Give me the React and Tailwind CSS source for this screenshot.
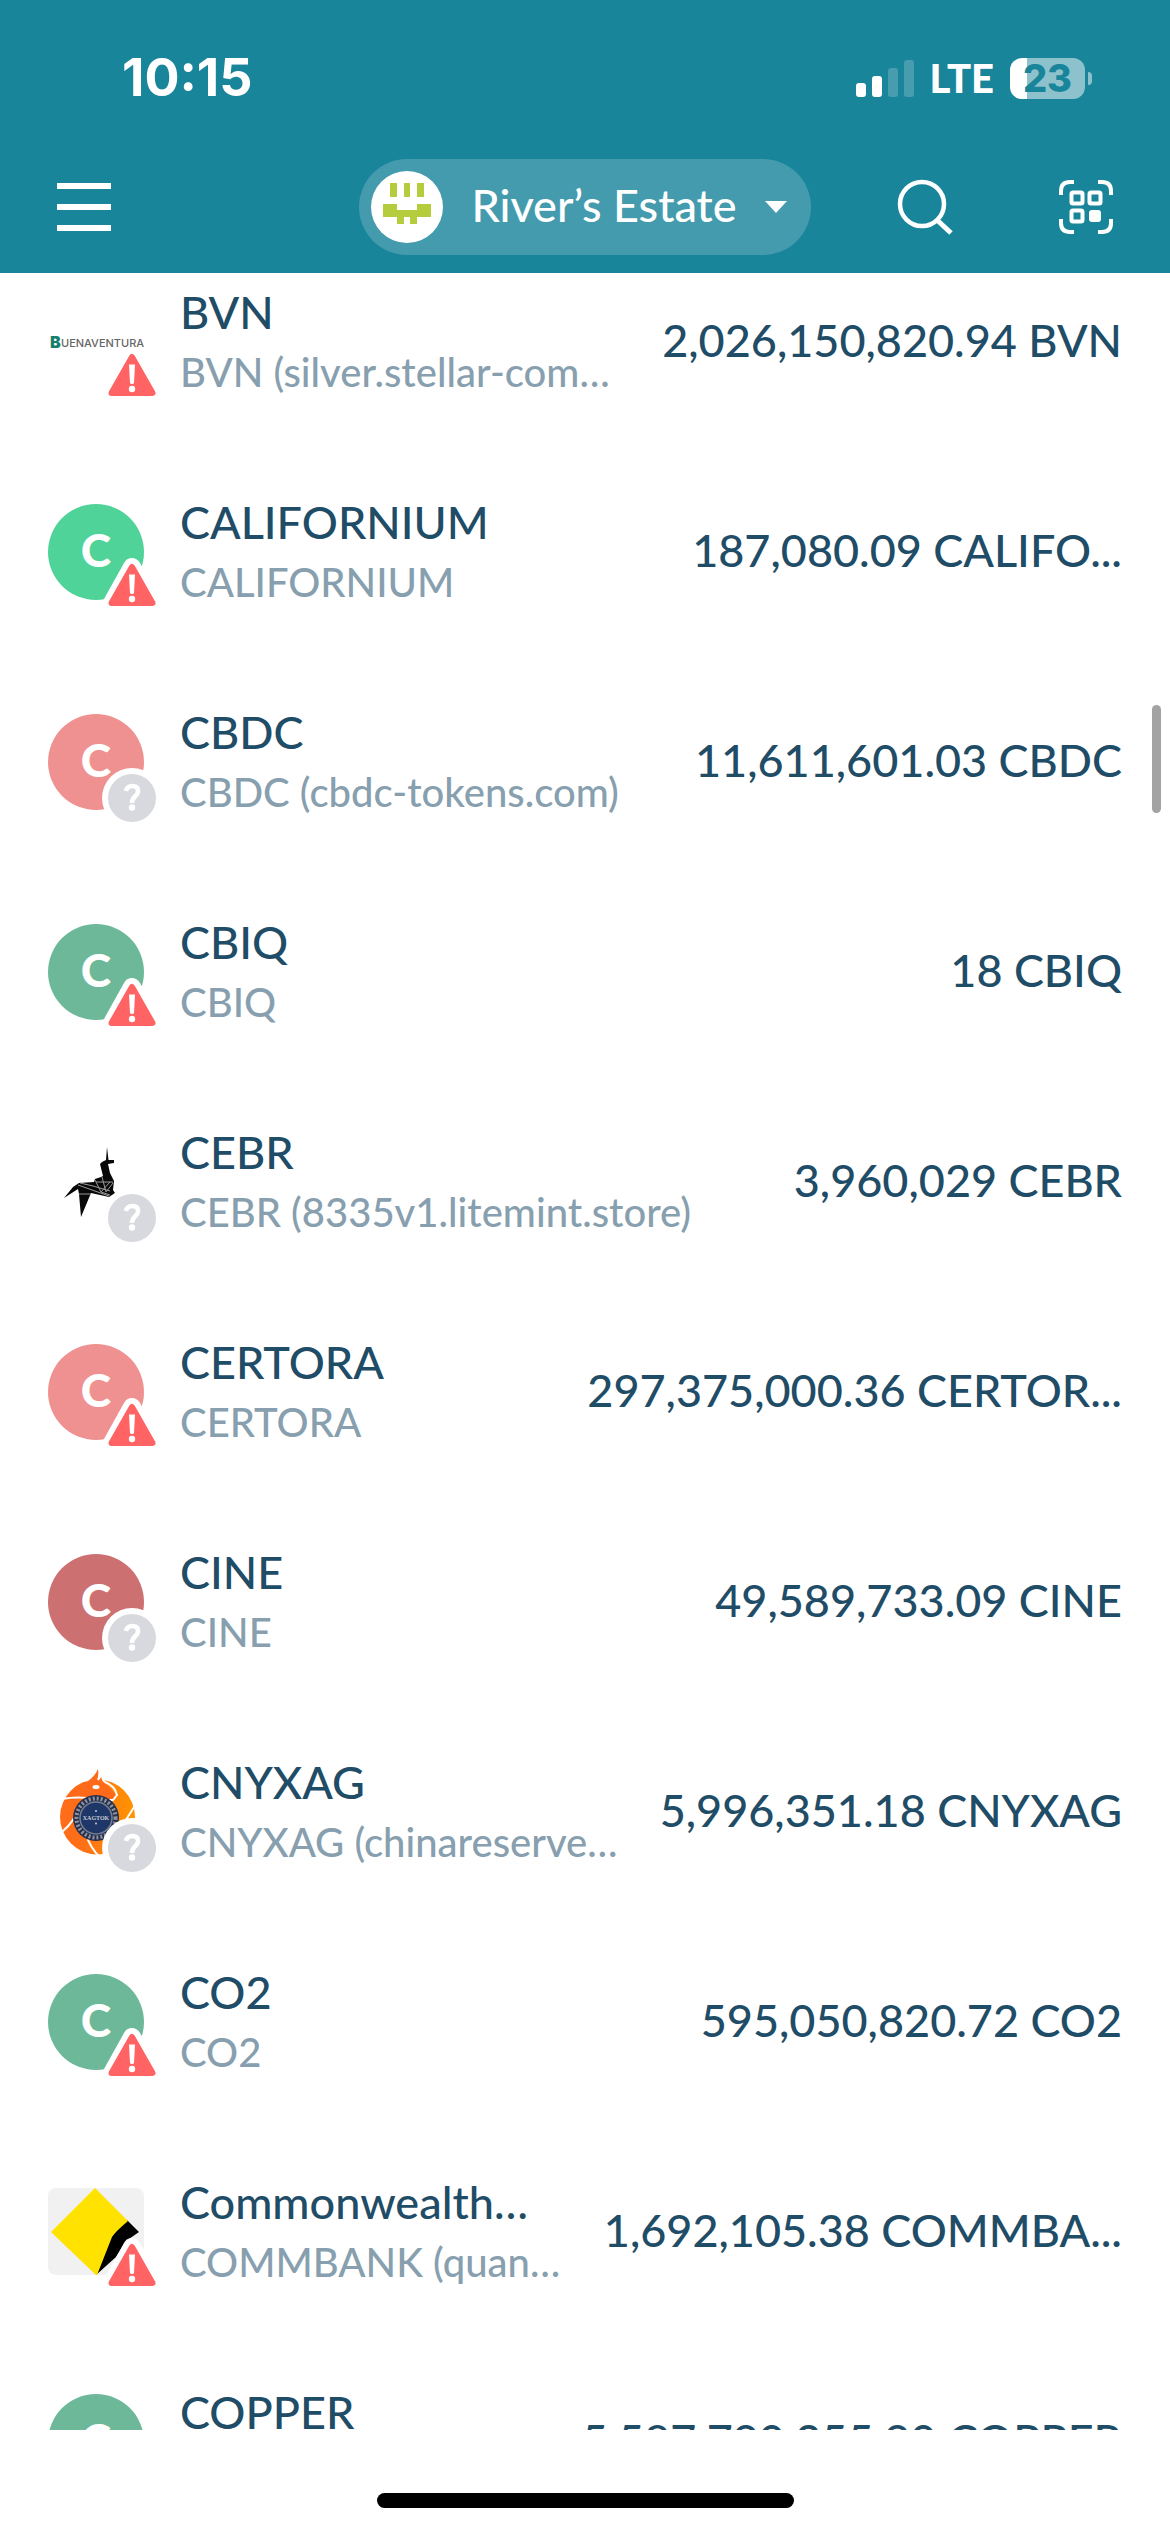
import React from "react";

function WarningBadge() {
  return (
    <svg viewBox="0 0 60 60" className="absolute -right-[18px] -bottom-3 h-[60px] w-[60px]" aria-label="Warning">
      <path d="M30 15 L50 51 L10 51 Z" fill="#fff" stroke="#fff" strokeWidth="18" strokeLinejoin="round" />
      <path d="M30 15 L50.500 51 L9.500 51 Z" fill="#ff6363" stroke="#ff6363" strokeWidth="6" strokeLinejoin="round" />
      <path d="M27 22.500 H33 L32 41 Q32 42 30 42 Q28 42 28 41 Z" fill="#fff" />
      <circle cx="30" cy="47" r="3.200" fill="#fff" />
    </svg>
  );
}

function UnknownBadge() {
  return (
    <svg viewBox="0 0 60 60" className="absolute -right-[18px] -bottom-[18px] h-[60px] w-[60px]" aria-label="Unknown">
      <circle cx="30" cy="30" r="30" fill="#fff" />
      <circle cx="30" cy="30" r="24" fill="#d8d9df" />
      <path d="M24 23 Q25 18 30.500 18 Q36 18 36 23 Q36 26 33 28.500 Q30 31 30 35" fill="none" stroke="#fff" strokeWidth="4.500" />
      <circle cx="30" cy="39.500" r="3.200" fill="#fff" />
    </svg>
  );
}

function LetterIcon({ color }) {
  return (
    <div className={`flex h-24 w-24 items-center justify-center rounded-full pb-1 text-[46px] leading-none font-black text-white ${color}`}>
      C
    </div>
  );
}

function BuenaventuraLogo() {
  return (
    <svg viewBox="0 0 96 96" className="h-24 w-24" aria-label="Buenaventura">
      <text x="2" y="54" fontFamily="Inter, sans-serif" fontWeight="900" fontSize="16" fill="#14806c">B</text>
      <text x="13" y="53" fontFamily="Inter, sans-serif" fontSize="11" fontWeight="500" fill="#666">UENAVENTURA</text>
    </svg>
  );
}

function UnicornLogo() {
  return (
    <svg viewBox="0 0 96 96" className="h-24 w-24" aria-label="Unicorn">
      <path d="M59 13 L60.500 26 L66 26 L66 29 L60 30 L62 39 L66 47 L65 56 L67 59 L61 63 L43 59 L33 83 L31 60 L30 55 L16 64 L25 53 L31 49 L46 48 L47 45 L53 43 L55 42 L52 30 L54 28 L58 26 Z" fill="#080808" />
      <path d="M30 51 L61 62 M32 49 L45 52 L62 57 M47 46 L53 58 L62 48 M54 43 L58 58 L65 49 M31 60 L43 60 M48 48 L65 48 M53 58 L62 61" fill="none" stroke="#999" strokeWidth="1" />
    </svg>
  );
}

function WolfLogo() {
  return (
    <svg viewBox="0 0 96 96" className="h-24 w-24" aria-label="CNYXAG">
      <defs>
        <linearGradient id="wolf" x1="0" y1="0" x2="1" y2="0">
          <stop offset="0.2" stopColor="#ff6c1a" />
          <stop offset="1" stopColor="#ff9400" />
        </linearGradient>
      </defs>
      <circle cx="49.500" cy="53" r="37.500" fill="url(#wolf)" />
      <path d="M38 0 H57 V17 L54 22 L38 18 Z" fill="#fff" />
      <path d="M19 34 Q26 20 40 17 Q47 12 50 5 Q51 11 49 16 L55 10 L55 17 L68 31 L66 35 L52 37 Z" fill="#ff6a1a" />
      <path d="M55 10 Q53 15 57 18 Q67 22 69 31 L65 36 L58 36 M50 16 L54 10" fill="none" stroke="#fff" strokeWidth="2" />
      <path d="M14 35 Q30 32 46 35 M31 42 Q28 56 14 68 M38 70 Q42 84 52 93 M88 40 L76 59" fill="none" stroke="#fff" strokeWidth="2" />
      <ellipse cx="48" cy="23" rx="3.500" ry="2" fill="#fff" />
      <circle cx="48" cy="54" r="23" fill="#25304c" />
      <circle cx="48" cy="54" r="19.500" fill="none" stroke="#8d93a3" strokeWidth="4" strokeDasharray="2 2" />
      <circle cx="48" cy="54" r="16" fill="#1f3768" stroke="#777f90" strokeWidth="1.500" />
      <circle cx="48" cy="47" r="1" fill="#c5cad6" />
      <circle cx="48" cy="59.500" r="1" fill="#c5cad6" />
      <text x="48" y="56" textAnchor="middle" fontFamily="Liberation Serif, serif" fontWeight="700" fontSize="6" fill="#c5cad6">XAGTOK</text>
    </svg>
  );
}

function BankLogo() {
  return (
    <svg viewBox="0 0 96 96" className="h-24 w-24" aria-label="Commonwealth Bank">
      <rect y="4" width="96" height="87" rx="8" fill="#f1f1f1" />
      <path d="M79 36 L91 48 L78 57 L68 73 L48 91 L60 50 Z" fill="#000" />
      <path d="M47 4 L80 37 Q67 48 64 53 L49 91 H48 L3 48 Z" fill="#ffe200" />
    </svg>
  );
}

const assets = [
  { name: "BVN", sub: "BVN (silver.stellar-com…", amount: "2,026,150,820.94 BVN", icon: <BuenaventuraLogo />, warn: true },
  { name: "CALIFORNIUM", sub: "CALIFORNIUM", amount: "187,080.09 CALIFO...", icon: <LetterIcon color="bg-[#50d399]" />, warn: true },
  { name: "CBDC", sub: "CBDC (cbdc-tokens.com)", amount: "11,611,601.03 CBDC", icon: <LetterIcon color="bg-[#f09191]" /> },
  { name: "CBIQ", sub: "CBIQ", amount: "18 CBIQ", icon: <LetterIcon color="bg-[#6cb898]" />, warn: true },
  { name: "CEBR", sub: "CEBR (8335v1.litemint.store)", amount: "3,960,029 CEBR", icon: <UnicornLogo /> },
  { name: "CERTORA", sub: "CERTORA", amount: "297,375,000.36 CERTOR...", icon: <LetterIcon color="bg-[#f09191]" />, warn: true },
  { name: "CINE", sub: "CINE", amount: "49,589,733.09 CINE", icon: <LetterIcon color="bg-[#cd7072]" /> },
  { name: "CNYXAG", sub: "CNYXAG (chinareserve…", amount: "5,996,351.18 CNYXAG", icon: <WolfLogo /> },
  { name: "CO2", sub: "CO2", amount: "595,050,820.72 CO2", icon: <LetterIcon color="bg-[#6cb898]" />, warn: true },
  { name: "Commonwealth…", sub: "COMMBANK (quan…", amount: "1,692,105.38 COMMBA...", icon: <BankLogo />, warn: true },
  { name: "COPPER", sub: "COPPER", amount: "5,587,790,255.90 COPPER", icon: <LetterIcon color="bg-[#6cb898]" />, warn: true },
];

function AssetRow({ asset }) {
  return (
    <li className="flex h-[210px] items-center gap-9 px-12 whitespace-nowrap">
      <div className="relative shrink-0">
        {asset.icon}
        {asset.warn ? <WarningBadge /> : <UnknownBadge />}
      </div>
      <div className="min-w-0 flex-1">
        <div className="text-[45px] leading-[60px] text-[#1f4c66]">{asset.name}</div>
        <div className="text-[40px] leading-[60px] text-[#879fae]">{asset.sub}</div>
      </div>
      <div className="pb-1 text-[45px] leading-[60px] text-[#1f4c66]">{asset.amount}</div>
    </li>
  );
}

function StatusBar() {
  return (
    <div className="flex h-[156px] items-center justify-between pr-[78px] pl-[122px] font-['Inter',sans-serif] font-bold">
      <div className="text-[52px] leading-none">10:15</div>
      <div className="flex items-center gap-4">
        <div className="flex items-end gap-[6px]" aria-label="Signal">
          <span className="h-[14px] w-[10px] rounded-[3px] bg-white" />
          <span className="h-[21px] w-[10px] rounded-[3px] bg-white" />
          <span className="h-[29px] w-[10px] rounded-[3px] bg-white/20" />
          <span className="h-[37px] w-[10px] rounded-[3px] bg-white/20" />
        </div>
        <div className="font-['Lato',sans-serif] text-[40px] leading-none font-black">LTE</div>
        <div className="flex items-center gap-[3px]">
          <div className="flex h-[41px] w-[75px] items-center justify-center rounded-[12px] bg-linear-to-r from-white from-[17px] to-[#8dc2cd] to-[17px] text-[38px] leading-none font-extrabold text-[#19859a]">23</div>
          <span className="h-[13px] w-[4px] rounded-r-full bg-[#8dc2cd]" />
        </div>
      </div>
    </div>
  );
}

function NavBar() {
  return (
    <div className="grid grid-cols-[1fr_auto_1fr] items-center px-[57px] pt-[3px] pb-[18px]">
      <button type="button" aria-label="Menu" className="flex w-[54px] flex-col gap-[15px]">
        <span className="h-[6px] bg-white" />
        <span className="h-[6px] bg-white" />
        <span className="h-[6px] bg-white" />
      </button>
      <button type="button" className="flex h-24 items-center rounded-full bg-[#459bae] pr-6 pl-3">
        <svg viewBox="0 0 72 72" className="h-[72px] w-[72px]" aria-hidden="true">
          <circle cx="36" cy="36" r="36" fill="#fff" />
          <path d="M19 12h7v14h-7zM33 12h6v14h-6zM46 12h7v14h-7zM12 33h14v6h20v-6h14v13H46v7h-7v-7h-6v7h-7v-7H12z" fill="#b5cc3d" />
        </svg>
        <span className="mx-7 pb-1 text-[45px] leading-[60px]">River’s Estate</span>
        <svg viewBox="0 0 22 12" className="h-3 w-[22px]" aria-hidden="true">
          <path d="M0 0H22L11 12Z" fill="#fff" />
        </svg>
      </button>
      <div className="flex items-center justify-end gap-[106px]">
        <button type="button" aria-label="Search">
          <svg viewBox="0 0 56 56" className="h-14 w-14" fill="none" stroke="#fff" strokeWidth="4.500">
            <circle cx="25" cy="25" r="22" />
            <path d="M40 41 L54 54" strokeWidth="5" />
          </svg>
        </button>
        <button type="button" aria-label="Scan QR code">
          <svg viewBox="0 0 54 54" className="h-[54px] w-[54px]" fill="none" stroke="#fff" strokeWidth="4">
            <path d="M15 2H11Q2 2 2 11V15M39 2H43Q52 2 52 11V15M15 52H11Q2 52 2 43V39M39 52H43Q52 52 52 43V39" />
            <rect x="12.500" y="12.500" width="11" height="11" rx="1.500" />
            <rect x="30.500" y="12.500" width="11" height="11" rx="1.500" />
            <rect x="12.500" y="30.500" width="11" height="11" rx="1.500" />
            <rect x="30" y="30" width="12" height="12" rx="3" fill="#fff" stroke="none" />
          </svg>
        </button>
      </div>
    </div>
  );
}

export default function App() {
  return (
    <div className="relative flex h-screen flex-col overflow-hidden bg-white font-['Lato','Open_Sans',sans-serif] font-medium">
      <header className="shrink-0 bg-[#19859a] text-white">
        <StatusBar />
        <NavBar />
      </header>
      <main className="min-h-0 flex-1 overflow-hidden">
        <ul className="-mt-9">
          {assets.map((a) => (
            <AssetRow key={a.name} asset={a} />
          ))}
        </ul>
      </main>
      <div className="absolute top-[705px] right-[9px] h-[108px] w-[9px] rounded-full bg-[#a3a3a3]" />
      <footer className="flex h-[102px] shrink-0 items-end justify-center pb-6">
        <div className="h-[15px] w-[417px] rounded-full bg-black" />
      </footer>
    </div>
  );
}
